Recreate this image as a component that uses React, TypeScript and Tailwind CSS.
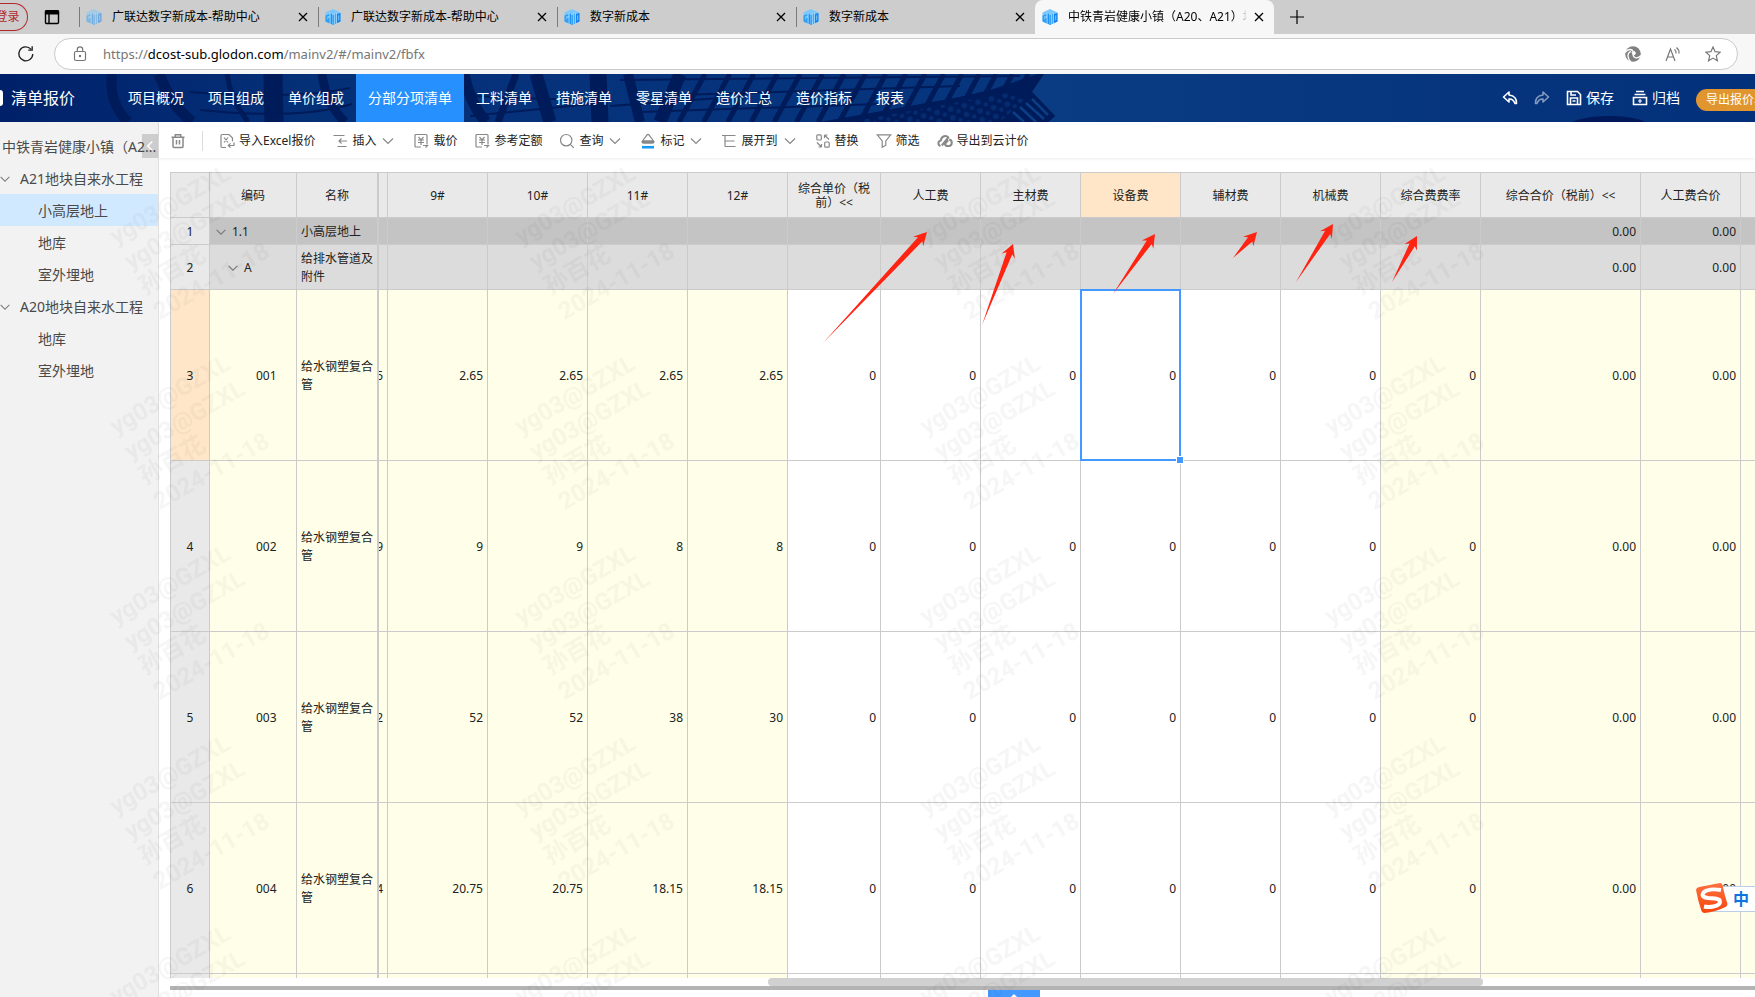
import { Fragment, useState } from "react";
import type { ReactNode } from "react";
import clsx from "clsx";

// --- Types ---
interface Row {
  no: number;
  level: number;
  code: string;
  name: string;
  kind: "section" | "group" | "item";
  cut: string;
  floors: string[];
}

// --- Data ---
const TABS = [
  { title: "广联达数字新成本-帮助中心", faded: true },
  { title: "广联达数字新成本-帮助中心" },
  { title: "数字新成本" },
  { title: "数字新成本" },
  { title: "中铁青岩健康小镇（A20、A21）地块", active: true },
];

const NAV = [
  "项目概况",
  "项目组成",
  "单价组成",
  "分部分项清单",
  "工料清单",
  "措施清单",
  "零星清单",
  "造价汇总",
  "造价指标",
  "报表",
];

const TREE = [
  { label: "A21地块自来水工程", children: ["小高层地上", "地库", "室外埋地"] },
  { label: "A20地块自来水工程", children: ["地库", "室外埋地"] },
];

const ROWS: Row[] = [
  { no: 1, level: 0, code: "1.1", name: "小高层地上", kind: "section", cut: "", floors: ["", "", "", ""] },
  { no: 2, level: 1, code: "A", name: "给排水管道及附件", kind: "group", cut: "", floors: ["", "", "", ""] },
  { no: 3, level: 2, code: "001", name: "给水钢塑复合管", kind: "item", cut: "5", floors: ["2.65", "2.65", "2.65", "2.65"] },
  { no: 4, level: 2, code: "002", name: "给水钢塑复合管", kind: "item", cut: "9", floors: ["9", "9", "8", "8"] },
  { no: 5, level: 2, code: "003", name: "给水钢塑复合管", kind: "item", cut: "2", floors: ["52", "52", "38", "30"] },
  { no: 6, level: 2, code: "004", name: "给水钢塑复合管", kind: "item", cut: "4", floors: ["20.75", "20.75", "18.15", "18.15"] },
];

const HEADERS = [
  "",
  "编码",
  "名称",
  "",
  "9#",
  "10#",
  "11#",
  "12#",
  "综合单价（税前）<<",
  "人工费",
  "主材费",
  "设备费",
  "辅材费",
  "机械费",
  "综合费费率",
  "综合合价（税前）<<",
  "人工费合价",
  "",
];

const ARROWS = [
  [823, 343, 927, 232],
  [982, 325, 1013, 244],
  [1113, 294, 1155, 234],
  [1233, 258, 1257, 232],
  [1296, 282, 1333, 224],
  [1392, 282, 1417, 236],
];

// --- Icons ---
function Icon({ children, className = "size-4" }: { children: ReactNode; className?: string }) {
  return (
    <svg
      viewBox="0 0 16 16"
      className={clsx("shrink-0", className)}
      fill="none"
      stroke="currentColor"
      strokeWidth="1.2"
      aria-hidden="true"
    >
      {children}
    </svg>
  );
}

const Chevron = ({ className }: { className?: string }) => (
  <Icon className={className}>
    <path d="M3 5.5l5 5 5-5" />
  </Icon>
);

const CloseIcon = () => (
  <Icon className="size-4">
    <path d="M4 4l8 8M12 4l-8 8" strokeWidth="1.3" />
  </Icon>
);

const Favicon = ({ faded }: { faded?: boolean }) => (
  <svg viewBox="0 0 16 16" className={clsx("size-4 shrink-0", faded && "opacity-50")} aria-hidden="true">
    <path d="M8 0l7.500 3.600v8.800L8 16 .5 12.400V3.600z" fill="#7cc8fb" />
    <path d="M.5 6.500L4.500 5v1.800L2.200 7.600v3l1-.4V8.700h1.600v5.700L.5 12.400z" fill="#2f9ff6" />
    <path d="M5.400 4.800H7v10.500l-1.600-.7zM7.600 6h1.300v9.700L8 16l-.4-.2z" fill="#1e93f5" />
    <path d="M9.600 4.800h1.500v9.700l-1.500.8z" fill="#3ba7f8" />
    <path d="M11.800 5l3.700-1v8.400l-3.700 1.800zM13.200 6.500v5l1-.5V6.200z" fill="#1683ef" fillRule="evenodd" />
    <path d="M5.100 4v10.600M9.250 4v11.300M11.450 4v10.500" stroke="#cfeaff" strokeWidth=".5" />
  </svg>
);

const ICONS = {
  trash: (
    <Icon>
      <path d="M1.5 4.2h13M5.3 4V1.8h5.4V4M3 4.2v9.3q0 1 1 1h8q1 0 1-1V4.2M6.5 7v4.5M9.5 7v4.5" strokeWidth="1.500" />
    </Icon>
  ),
  excel: (
    <Icon>
      <path d="M7 14.5H3.2q-1.2 0-1.2-1.2V2.7q0-1.2 1.2-1.2H10L13.5 5v3.2" />
      <path d="M5 4.5l4 5M9 4.5l-4 5M15 9.5v3H9.5M11.5 10.3l-2.2 2.2 2.2 2.2" />
    </Icon>
  ),
  insert: (
    <Icon>
      <path d="M1.5 2.5h11M5.5 13.5h9M7 8h8M9.5 5.5L7 8l2.5 2.5" />
    </Icon>
  ),
  price: (
    <Icon>
      <path d="M8 14H3q-1 0-1-1V2.5q0-1 1-1h10q1 0 1 1v9M5.5 4L8 6.8 10.5 4M5 7h6M5 9.5h6M8 7v5" />
      <path d="M10 12.5h4.5l-2 2.2" />
    </Icon>
  ),
  search: (
    <Icon>
      <circle cx="7.2" cy="7.2" r="5.7" />
      <path d="M11.3 11.3l3.5 3.5" />
    </Icon>
  ),
  mark: (
    <Icon>
      <path d="M2.500 8L7 2q1-1 2 0l4.500 6q1 2-1 2h-9q-2 0-1-2z" />
      <path d="M2.500 7.200h11l1 1.600q0 1.700-2 1.700h-9q-2 0-2-1.700z" fill="currentColor" stroke="none" />
      <path d="M2 14.200h12" stroke="#149bf3" strokeWidth="2.600" />
    </Icon>
  ),
  expand: (
    <Icon>
      <path d="M1 2.500h13.500M4 2.500v11M4 8h9.500M4 13.500h10.500" />
    </Icon>
  ),
  replace: (
    <Icon>
      <rect x="1.800" y="1.800" width="4.500" height="5.200" rx="1" />
      <rect x="9.700" y="9" width="4.500" height="5.200" rx="1" />
      <path d="M9.500 2h3M9.500 2v3M9.500 2l4.500 4.500M6.500 14h-3M6.500 14v-3M6.500 14L2 9.500" />
    </Icon>
  ),
  filter: (
    <Icon>
      <path d="M1.300 1.800h13.400L9.800 8v4.200l-3.600 2V8z" />
    </Icon>
  ),
  cloud: (
    <Icon>
      <path
        d="M3.500 13C.5 12 .8 8 3.800 7.500 4.500 3 9 1.800 11.300 4.500L4.800 12.500"
        strokeWidth="2"
        strokeLinejoin="round"
      />
      <path d="M12.200 6.500c3.500.5 3.300 6 0 6.500H9.500L7.800 11.200l3.400-4" strokeWidth="2" strokeLinejoin="round" />
    </Icon>
  ),
};

const TOOLS = [
  { label: "导入Excel报价", icon: ICONS.excel },
  { label: "插入", icon: ICONS.insert, menu: true },
  { label: "载价", icon: ICONS.price },
  { label: "参考定额", icon: ICONS.price },
  { label: "查询", icon: ICONS.search, menu: true },
  { label: "标记", icon: ICONS.mark, menu: true },
  { label: "展开到", icon: ICONS.expand, menu: true },
  { label: "替换", icon: ICONS.replace },
  { label: "筛选", icon: ICONS.filter },
  { label: "导出到云计价", icon: ICONS.cloud },
];

// --- Browser chrome ---
function TabStrip() {
  return (
    <div className="flex h-[34px] shrink-0 overflow-hidden bg-[#cdcdcd] text-xs text-black">
      <button className="my-[3px] w-7 shrink-0 rounded-r-full border border-l-0 border-[#b3282d] text-[#b3282d]">
        <span className="-ml-3 whitespace-nowrap">登录</span>
      </button>
      <button aria-label="标签操作" className="flex w-[51px] shrink-0 items-center pl-4">
        <Icon>
          <path d="M1.500 3q0-1.200 1.200-1.200h10.600q1.200 0 1.200 1.200v10.300q0 1.200-1.200 1.200H2.700q-1.200 0-1.200-1.200zM5 5v9" strokeWidth="1.400" />
          <path d="M1.500 5V2h13v3z" fill="currentColor" />
        </Icon>
      </button>
      {TABS.map((tab, i) => (
        <div
          key={i}
          className={clsx(
            "flex h-full w-[239px] shrink-0 items-center",
            tab.active ? "rounded-t-lg bg-[#f7f7f7]" : "",
          )}
        >
          <span className={clsx("h-5 w-px shrink-0", tab.active ? "bg-transparent" : "bg-[#7a7a7a]")} />
          <a href="#" className="ml-1.5 flex min-w-0 flex-1 items-center gap-2.5">
            <Favicon faded={tab.faded} />
            <span
              className={clsx(
                "overflow-hidden whitespace-nowrap",
                tab.active && "[mask-image:linear-gradient(to_right,black_94%,transparent)]",
              )}
            >
              {tab.title}
            </span>
          </a>
          <button aria-label="关闭标签" className="mr-[7px] ml-1 shrink-0">
            <CloseIcon />
          </button>
        </div>
      ))}
      <button aria-label="新建标签" className="ml-[15px] shrink-0">
        <Icon>
          <path d="M8 1v14M1 8h14" />
        </Icon>
      </button>
    </div>
  );
}

function AddressBar() {
  return (
    <div className="flex h-10 shrink-0 items-center bg-[#f7f7f7] pr-[17px]">
      <button aria-label="刷新" className="flex w-[54px] shrink-0 items-center pl-[17px] text-[#222]">
        <Icon className="size-[18px]">
          <path d="M14 8a6.200 6.200 0 1 1-1.600-4.300M13.500 1v3.500H10" />
        </Icon>
      </button>
      <div className="flex h-8 flex-1 items-center rounded-full border border-[#cacaca] bg-white pr-4 pl-[17px] text-[#767676]">
        <Icon>
          <rect x="2.500" y="5.500" width="11" height="9" rx="1.500" />
          <path d="M5.300 5.500V3.500a2.700 2.700 0 0 1 5.400 0v2" />
          <circle cx="8" cy="10" r=".6" fill="currentColor" />
        </Icon>
        <div
          role="textbox"
          aria-label="地址"
          contentEditable
          suppressContentEditableWarning
          className="ml-[15px] flex-1 pt-0.5 text-[13px]"
        >
          https://<span className="text-black">dcost-sub.glodon.com</span>/mainv2/#/mainv2/fbfx
        </div>
        <div className="flex items-center gap-6">
          <button aria-label="扩展">
            <Icon>
              <circle cx="8" cy="8" r="7.800" fill="#808080" stroke="none" />
              <path d="M0 6.500C3 2.500 7 2.800 8.300 5.500M5.800 16C1.500 11 2.500 6.500 6 5.500M16 9.500c-3 3.500-7.500 3-8-1" stroke="#fff" strokeWidth="1.300" />
              <path d="M6.500 5.700l3-.7 1.500 2-1 2-2.200.2z" fill="#fff" stroke="none" />
            </Icon>
          </button>
          <button aria-label="朗读">
            <Icon>
              <path d="M1 15L5.500 3 10 15M2.500 11h6M9.500 3.500q2 1.500 1.500 4M11.500 1.500q3 2.500 2.500 6" />
            </Icon>
          </button>
          <button aria-label="收藏">
            <Icon>
              <path d="M8 1l2.100 4.700 5 .5-3.800 3.400 1.100 5.100L8 12.100l-4.400 2.600 1.100-5.100L.9 6.200l5-.5z" />
            </Icon>
          </button>
        </div>
      </div>
    </div>
  );
}

// --- App header ---
function HeaderArt() {
  const ribs = Array.from({ length: 17 }, (_, i) => 705 + i * (25 - i * 0.3));
  return (
    <svg className="absolute inset-0 h-full w-full" aria-hidden="true">
      <defs>
        <linearGradient id="sky" x1="0" x2="1">
          <stop offset="0" stopColor="#0b3f85" />
          <stop offset="0.500" stopColor="#0b3f85" />
          <stop offset="1" stopColor="#03307a" />
        </linearGradient>
        <linearGradient id="glass" x1="0" x2="1">
          <stop offset="0" stopColor="#00216a" />
          <stop offset="0.300" stopColor="#043078" />
          <stop offset="1" stopColor="#07367e" />
        </linearGradient>
        <pattern id="cells" width="14" height="9" patternUnits="userSpaceOnUse" patternTransform="rotate(-14)">
          <circle cx="4" cy="3" r="2.800" fill="#052c70" />
          <circle cx="11" cy="7" r="2.200" fill="#052c70" />
        </pattern>
      </defs>
      <rect width="100%" height="48" fill="url(#sky)" />
      <path d="M0 0H1044L1032 18 1055 42 1048 48H0z" fill="#001b5a" />
      <path d="M0 0H1038L990 16 850 48H0z" fill="url(#glass)" />
      <g stroke="#001b5a" fill="none">
        <path d="M112 0Q108 28 128 48" strokeWidth="10" />
        <path d="M159 0Q170 30 192 48" strokeWidth="11" />
        <path d="M227 0Q230 24 248 48" strokeWidth="5" />
        <path d="M273 0L274 48" strokeWidth="19" />
        <path d="M322 0Q326 30 345 48" strokeWidth="9" />
        <path d="M464 0Q470 30 486 48" strokeWidth="11" />
        <path d="M516 0L498 48" strokeWidth="7" />
        <path d="M536 0L550 48" strokeWidth="13" />
        <path d="M598 0L600 48" strokeWidth="17" />
        <path d="M628 0L640 48" strokeWidth="10" />
        <path d="M680 0L660 48" strokeWidth="13" />
        <path d="M190 18Q290 26 350 14M200 36Q300 46 352 30M470 22L580 26M470 42L590 30M610 32L720 24" strokeWidth="2" />
        <path d="M620 6L1020 2M650 22L960 12M640 38L880 30" strokeWidth="2" />
        {ribs.map((x) => (
          <path key={x} d={`M${x} 0L${x - 26} 48`} strokeWidth="5" />
        ))}
      </g>
      <path d="M820 48L1010 14 1032 18 1055 42 1048 48z" fill="#001b5a" />
      <path d="M850 48L1008 19 1024 26 1000 48z" fill="url(#cells)" />
      <path d="M1026 29L1044 45M1020 33L1036 48M1013 38L1024 48M1032 25L1048 41" stroke="#0b3f85" strokeWidth="2.500" />
      <ellipse cx="1609" cy="52" rx="40" ry="10" fill="#00195a" />
    </svg>
  );
}

function AppHeader() {
  const [active, setActive] = useState("分部分项清单");
  return (
    <header className="relative flex h-12 shrink-0 items-stretch overflow-hidden bg-[#001b5a] text-white">
      <HeaderArt />
      <div className="relative flex w-[116px] shrink-0 items-center gap-2 text-base">
        <span className="h-4 w-[3px] rounded-r bg-white" />
        清单报价
      </div>
      <nav className="relative flex text-sm">
        {NAV.map((item) => (
          <a
            key={item}
            href="#"
            onClick={() => setActive(item)}
            className={clsx(
              "flex items-center px-3 whitespace-nowrap",
              item === active && "bg-[#2790ff]",
            )}
          >
            {item}
          </a>
        ))}
      </nav>
      <div className="relative -mr-[45px] ml-auto flex shrink-0 items-center text-sm">
        <button aria-label="撤销" className="mr-4">
          <Icon>
            <path d="M7 2L1.500 7 7 12V9q4-.5 6 4.500h1.500Q15 6 7 5z" strokeWidth="1.600" strokeLinejoin="round" />
          </Icon>
        </button>
        <button aria-label="重做" className="mr-4 opacity-50">
          <Icon>
            <path d="M9 2l5.500 5L9 12V9q-4-.5-6 4.500H1.500Q1 6 9 5z" strokeWidth="1.600" strokeLinejoin="round" />
          </Icon>
        </button>
        <button className="mr-[18px] flex items-center gap-1">
          <Icon>
            <path d="M1.500 1.500h10l3 3v10h-13zM4.500 14V8h7v6M5 1.500v3.500h5M6.500 11h3" strokeWidth="1.600" />
          </Icon>
          保存
        </button>
        <button className="mr-4 flex items-center gap-1">
          <Icon>
            <path d="M4 1.500h8M2.500 4.500h11M1.500 7.500h13v7h-13z" strokeWidth="1.600" />
            <path d="M8 9v4M6 11h4" />
          </Icon>
          归档
        </button>
        <button className="mt-1 flex h-[22px] items-center rounded-full bg-[#e0952f] px-2.5 text-xs">
          导出报价单数据
        </button>
      </div>
    </header>
  );
}

// --- Sidebar ---
function Sidebar() {
  const [open, setOpen] = useState(true);
  return (
    <aside className="relative w-[159px] shrink-0 border-r border-[#e0e0e0] bg-[#f2f2f2] pt-2 text-sm text-[#4a4a4a]">
      <button
        aria-label="收起目录"
        onClick={() => setOpen(!open)}
        className="absolute top-3 right-0 flex h-6 w-4 items-center justify-center bg-[#cdcdcd] text-white"
      >
        <Icon className="size-3">
          <path d="M11 2L5 8l6 6" strokeWidth="2" />
        </Icon>
      </button>
      <div className="relative h-8 pl-0.5 leading-[34px] whitespace-nowrap">中铁青岩健康小镇（A2...</div>
      {TREE.map((branch, bi) => (
        <Fragment key={branch.label}>
          <div className="flex h-8 items-center pt-0.5 whitespace-nowrap">
            <Chevron className="mr-2 -ml-0.5 size-[14px] text-[#808080]" />
            {branch.label}
          </div>
          {open &&
            branch.children.map((child, ci) => (
              <a
                key={child}
                href="#"
                className={clsx("block h-8 pl-[38px] leading-[34px]", bi === 0 && ci === 0 && "bg-[#d1e9ff]")}
              >
                {child}
              </a>
            ))}
        </Fragment>
      ))}
    </aside>
  );
}

// --- Toolbar ---
function Toolbar() {
  return (
    <div className="relative flex h-9 shrink-0 items-center bg-white pt-0.5 pl-[11px] text-xs text-[#222] shadow-[0_1px_3px_rgba(0,0,0,0.08)]">
      <button aria-label="删除" className="text-[#888]">
        {ICONS.trash}
      </button>
      <span className="mr-4 ml-4 h-5 w-px bg-[#dcdcdc]" />
      <div className="flex gap-[17px]">
        {TOOLS.map((tool) => (
          <button key={tool.label} className="flex items-center gap-1 whitespace-nowrap">
            <span className="text-[#888]">{tool.icon}</span>
            {tool.label}
            {tool.menu && <Chevron className="size-4 text-[#888]" />}
          </button>
        ))}
      </div>
    </div>
  );
}

// --- Table ---
const CELL = "border-r border-b border-[#cbcbcb] pt-0.5";
const NUM = "px-1 text-right";

function SheetRow({ row }: { row: Row }) {
  const item = row.kind === "item";
  const unit = item ? "0" : "";
  const locked = clsx(
    row.kind === "section" && "bg-[#c4c4c4]",
    row.kind === "group" && "bg-[#dcdcdc]",
    item && "bg-[#ffffe9]",
  );
  const editable = item ? "bg-white" : locked;
  const height = row.kind === "section" ? "h-[27px]" : row.kind === "group" ? "h-[45px]" : "h-[171px]";

  return (
    <tr className={height}>
      <th scope="row" className={clsx(CELL, "font-normal", row.no === 3 ? "bg-[#ffe6c8]" : "bg-[#e9e9e9]")}>
        {row.no}
      </th>
      <td className={clsx(CELL, locked)}>
        <div
          className={clsx(
            "flex items-center gap-1",
            row.level === 0 && "pl-1",
            row.level === 1 && "pl-4",
            row.level === 2 && "pl-[46px]",
          )}
        >
          {!item && <Chevron className="size-[14px] text-[#777]" />}
          {row.code}
        </div>
      </td>
      <td className={clsx(CELL, locked, "border-r-2 pl-1 leading-[18px]")}>{row.name}</td>
      <td className={clsx(CELL, locked, "overflow-hidden")}>
        <div className="flex justify-end overflow-hidden pr-1">{row.cut}</div>
      </td>
      {row.floors.map((value, i) => (
        <td key={i} className={clsx(CELL, locked, NUM)}>
          {value}
        </td>
      ))}
      {[0, 1, 2, 3, 4, 5].map((i) => (
        <td key={i} className={clsx(CELL, editable, NUM, "relative")}>
          {unit}
          {row.no === 3 && i === 3 && (
            <span className="absolute -inset-px border-2 border-[#4399ff]">
              <span className="absolute -right-[5px] -bottom-[5px] z-10 size-2 border border-white bg-[#4399ff]" />
            </span>
          )}
        </td>
      ))}
      <td className={clsx(CELL, locked, NUM)}>{unit}</td>
      <td className={clsx(CELL, locked, NUM)}>0.00</td>
      <td className={clsx(CELL, locked, NUM)}>0.00</td>
      <td className={clsx("border-b border-[#cbcbcb]", locked)} />
    </tr>
  );
}

function Sheet() {
  return (
    <div className="min-h-0 flex-1 overflow-hidden">
      <table className="w-full table-fixed border-separate border-spacing-0 border-t border-l border-[#cbcbcb] text-xs text-[#222]">
        <colgroup>
          <col className="w-[39px]" />
          <col className="w-[87px]" />
          <col className="w-[82px]" />
          <col className="w-[9px]" />
          <col className="w-[100px]" />
          <col className="w-[100px]" />
          <col className="w-[100px]" />
          <col className="w-[100px]" />
          <col className="w-[93px]" />
          <col className="w-[100px]" />
          <col className="w-[100px]" />
          <col className="w-[100px]" />
          <col className="w-[100px]" />
          <col className="w-[100px]" />
          <col className="w-[100px]" />
          <col className="w-[160px]" />
          <col className="w-[100px]" />
          <col />
        </colgroup>
        <thead>
          <tr className="h-[45px]">
            {HEADERS.map((label, i) => (
              <th
                key={i}
                className={clsx(
                  "border-b border-[#cbcbcb] pt-0.5 leading-[14px] font-normal",
                  i < HEADERS.length - 1 && "border-r",
                  i === 2 && "border-r-2",
                  i !== 3 && i < HEADERS.length - 1 && "px-2",
                  label === "设备费" ? "bg-[#ffe6c8]" : "bg-[#e9e9e9]",
                )}
              >
                {label}
              </th>
            ))}
          </tr>
        </thead>
        <tbody>
          {ROWS.map((row) => (
            <SheetRow key={row.no} row={row} />
          ))}
          {/* next row, only its top edge is in view */}
          <tr className="h-10">
            {HEADERS.map((_, i) => (
              <td
                key={i}
                className={clsx(
                  "border-[#cbcbcb]",
                  i < HEADERS.length - 1 && "border-r",
                  i === 2 && "border-r-2",
                  i === 0 && "bg-[#e9e9e9]",
                  ((i > 0 && i < 8) || i > 13) && "bg-[#ffffe9]",
                )}
              />
            ))}
          </tr>
        </tbody>
      </table>
    </div>
  );
}

// --- Overlays ---
function Watermark() {
  return (
    <svg className="pointer-events-none absolute inset-0 z-20 h-full w-full" aria-hidden="true">
      <defs>
        <pattern id="mark" x="90" y="150" width="405" height="190" patternUnits="userSpaceOnUse">
          <g
            transform="translate(26 95) rotate(-30)"
            className="font-['Roboto','Noto_Sans_CJK_SC',sans-serif] text-2xl font-bold"
            fill="#000"
            fillOpacity="0.035"
          >
            <text y="0">yg03@GZXL</text>
            <text y="29">yg03@GZXL</text>
            <text y="58">孙百花</text>
            <text y="87">2024-11-18</text>
          </g>
        </pattern>
      </defs>
      <rect x="90" y="150" width="1620" height="100%" fill="url(#mark)" />
    </svg>
  );
}

function arrowPath([x1, y1, x2, y2]: number[]) {
  const len = Math.hypot(x2 - x1, y2 - y1);
  const ux = (x2 - x1) / len;
  const uy = (y2 - y1) / len;
  const at = (back: number, side: number) =>
    `${(x2 - ux * back - uy * side).toFixed(1)} ${(y2 - uy * back + ux * side).toFixed(1)}`;
  return `M${x1} ${y1}L${at(10, 3)}L${at(13, 7)}L${at(0, 0)}L${at(13, -7)}L${at(10, -3)}z`;
}

function Arrows() {
  return (
    <svg className="pointer-events-none absolute inset-0 z-20 h-full w-full" aria-hidden="true">
      {ARROWS.map((arrow) => (
        <path key={arrow.join()} d={arrowPath(arrow)} fill="#ff2312" />
      ))}
    </svg>
  );
}

function ImeBar() {
  return (
    <div className="absolute right-0 bottom-[84px] z-30 flex items-center">
      <svg viewBox="0 0 32 30" className="relative z-10 -mr-4 h-[30px] w-8" aria-hidden="true">
        <defs>
          <linearGradient id="ime" x2="0" y2="1">
            <stop offset="0" stopColor="#ff7040" />
            <stop offset="1" stopColor="#f4470e" />
          </linearGradient>
        </defs>
        <path d="M3 4Q14 2 24 0q2 0 2.500 2 2 10 5 19 0 2-2 3-10 5-21 6-2 0-3-2Q2 18 0 7q0-2 3-3z" fill="url(#ime)" />
        <path
          d="M25 7Q12 5 7.500 9.500 4.500 14 12 15q8 0 11.500 2 2 5-6 6.500-5 1-9.500 0"
          fill="none"
          stroke="#fff"
          strokeWidth="4"
        />
      </svg>
      <button className="mt-0.5 flex h-[26px] w-[43px] items-center justify-end border-y border-[#b9cfe9] bg-white pr-1.5 text-base font-bold text-[#0b74de]">
        中
      </button>
    </div>
  );
}

export default function App() {
  return (
    <div className="relative flex h-screen flex-col overflow-hidden bg-white font-['Noto_Sans','Noto_Sans_CJK_SC',sans-serif]">
      <TabStrip />
      <AddressBar />
      <AppHeader />
      <div className="flex min-h-0 flex-1">
        <Sidebar />
        <main className="flex min-w-0 flex-1 flex-col">
          <Toolbar />
          <div className="flex min-h-0 flex-1 flex-col pt-[14px] pl-[11px]">
            <Sheet />
            <div className="flex h-2 shrink-0">
              <div className="mr-[272px] ml-[598px] flex-1 rounded-full bg-[#d1d1d1]" />
            </div>
            <div className="h-1 shrink-0 bg-[#b3b3b3]" />
            <div className="h-[7px] shrink-0 overflow-hidden">
              <button
                aria-label="展开明细"
                className="ml-[818px] flex h-4 w-[52px] justify-center bg-[#4399ff] pt-0.5 text-white"
              >
                <Icon className="size-3">
                  <path d="M3 9l5-5 5 5" strokeWidth="2" />
                </Icon>
              </button>
            </div>
          </div>
        </main>
      </div>
      <Watermark />
      <Arrows />
      <ImeBar />
    </div>
  );
}
